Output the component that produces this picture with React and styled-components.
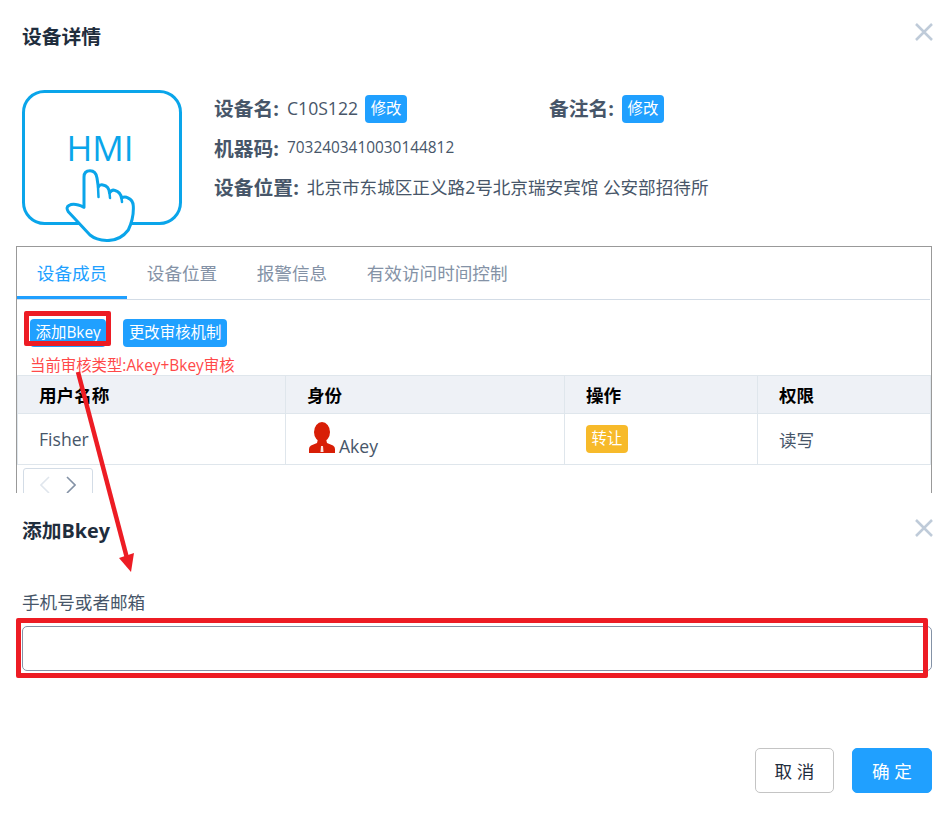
import React from 'react'
import styled, { createGlobalStyle } from 'styled-components'

const GlobalStyle = createGlobalStyle`
  html, body {
    margin: 0;
    padding: 0;
    background: #fff;
  }
  * {
    box-sizing: border-box;
  }
  body {
    font-family: "Open Sans", "Noto Sans CJK SC", sans-serif;
    color: #475669;
  }
`

const Page = styled.div`
  position: relative;
  width: 951px;
  height: 826px;
  overflow: hidden;
`

const DetailDialog = styled.section`
  height: 493px;
  overflow: hidden;
`

const DialogHeader = styled.header`
  display: flex;
  justify-content: space-between;
  align-items: flex-start;
  height: ${props => props.$height}px;
  padding: ${props => props.$top}px 18px 0 22px;
`

const DialogTitle = styled.h2`
  margin: 0;
  font-size: 19.8px;
  line-height: 30px;
  font-weight: 700;
  color: #1f2d3d;
`

const CloseButton = styled.button`
  display: block;
  width: 18px;
  height: 18px;
  margin-top: ${props => props.$offset || 1}px;
  padding: 0;
  border: 0;
  background: none;
  svg {
    display: block;
  }
`

const InfoRow = styled.div`
  display: flex;
  gap: 32px;
  padding-left: 22px;
`

const InfoList = styled.div`
  display: flex;
  flex-direction: column;
  margin-top: -1px;
`

const InfoLine = styled.div`
  display: flex;
  align-items: center;
  height: 39.5px;
  white-space: nowrap;
`

const InfoCell = styled.div`
  display: flex;
  align-items: center;
  width: ${props => props.$width || 'auto'};
`

const Label = styled.span`
  padding-bottom: 2px;
  margin-right: 8px;
  font-size: 19.8px;
  font-weight: 700;
`

const Value = styled.span`
  padding-bottom: 2px;
  font-size: ${props => props.$size || 17.6}px;
`

const SmallButton = styled.button`
  height: 28px;
  margin-left: ${props => props.$left || 0}px;
  padding: 0 5.6px;
  border: 0;
  border-radius: 4px;
  background: ${props => props.$color || '#20a0ff'};
  color: #fff;
  font-family: inherit;
  font-size: 15.4px;
  line-height: 1;
  white-space: nowrap;
`

const TabsBox = styled.div`
  height: 300px;
  margin: 4px 19px 0 16px;
  border: 1px solid #999;
`

const TabBar = styled.div`
  display: flex;
  height: 53px;
  margin-right: 1px;
  border-bottom: 1px solid #d3dce6;
`

const Tab = styled.div`
  height: 52px;
  padding: 0 19.8px;
  border-bottom: 3px solid ${props => (props.$active ? '#20a0ff' : 'transparent')};
  color: ${props => (props.$active ? '#20a0ff' : '#8492a6')};
  font-size: 17.6px;
  line-height: 52px;
  white-space: nowrap;
`

const MemberPane = styled.div`
  padding-top: 19px;
`

const ToolRow = styled.div`
  display: flex;
  gap: 17px;
  padding-left: 13px;
`

const AuditNote = styled.div`
  height: 28px;
  padding-left: 13px;
  color: #ff4949;
  font-size: 15.4px;
  line-height: 38px;
  white-space: nowrap;
`

const MemberTable = styled.table`
  width: 913px;
  border-collapse: collapse;
  table-layout: fixed;
`

const HeadCell = styled.th`
  width: ${props => props.$width}px;
  height: 38px;
  padding: 0 0 0 21px;
  border: 1px solid #dfe6ec;
  background: #eef1f6;
  color: #000;
  font-size: 17.6px;
  font-weight: 700;
  text-align: left;
`

const BodyCell = styled.td`
  height: 51px;
  padding: 0 0 0 21px;
  border: 1px solid #dfe6ec;
  font-size: 17.6px;
  white-space: nowrap;
`

const RoleIcon = styled.svg`
  width: 26px;
  height: 32px;
  margin: 0 4px 0 2px;
  vertical-align: -3px;
`

const RoleText = styled.span`
  position: relative;
  top: 2px;
`

const Pager = styled.div`
  display: flex;
  justify-content: space-around;
  align-items: center;
  width: 70px;
  height: 34px;
  margin: 3px 0 0 6px;
  padding: 0 8px;
  border: 1px solid #d3dce6;
  border-radius: 3px;
`

const AddDialog = styled.section`
  height: 333px;
`

const FieldLabel = styled.label`
  display: block;
  margin-top: 33px;
  padding-left: 22px;
  font-size: 17.6px;
  line-height: 26px;
`

const PhoneInput = styled.input`
  display: block;
  width: 910px;
  height: 45px;
  margin: 11px 0 0 22px;
  border: 1px solid #8492a6;
  border-radius: 5px;
  background: #fff;
  outline: none;
`

const DialogFooter = styled.footer`
  display: flex;
  justify-content: flex-end;
  gap: 18px;
  margin-top: 77px;
  padding-right: 19px;
`

const FooterButton = styled.button`
  width: ${props => (props.$primary ? 80 : 79)}px;
  height: 45px;
  padding: 0;
  border: 1px solid ${props => (props.$primary ? '#20a0ff' : '#c4c4c4')};
  border-radius: 5px;
  background: ${props => (props.$primary ? '#20a0ff' : '#fff')};
  color: ${props => (props.$primary ? '#fff' : '#1f2d3d')};
  font-family: inherit;
  font-size: 17.6px;
`

const MarkBox = styled.div`
  position: absolute;
  left: ${props => props.$x}px;
  top: ${props => props.$y}px;
  width: ${props => props.$w}px;
  height: ${props => props.$h}px;
  border: 5px solid #ed1c24;
  border-radius: 2px;
  pointer-events: none;
`

const ArrowLayer = styled.svg`
  position: absolute;
  left: 0;
  top: 0;
  pointer-events: none;
`

const CloseIcon = () => (
  <svg width="18" height="18" viewBox="0 0 18 18" fill="none" stroke="#bfcbd9" strokeWidth="2.500">
    <path d="M1 1 17 17M17 1 1 17" />
  </svg>
)

const HmiIcon = () => (
  <svg width="160" height="152" viewBox="0 0 160 152" fill="none">
    <rect x="1.500" y="1.500" width="157" height="132" rx="21" stroke="#0aa5ea" strokeWidth="3" />
    <text x="78" y="71" textAnchor="middle" fontFamily="'Open Sans', sans-serif" fontSize="35" fill="#0aa5ea">
      HMI
    </text>
    <path
      d="M62 87Q62 80.700 68 80.700Q74 80.700 75 88L76.300 97Q78 94 81 95Q87 96 87.500 103Q90 99 93 100.500Q98.500 102 99.500 108Q103 106 106 108Q111 110 111.300 116Q112 128 106.300 140Q98 151 84.700 150.500Q74 150 68 145Q56 132 46.300 121.700Q43.500 117 47 115.500Q52 112.500 62 117.300Z"
      fill="#fff"
      stroke="#0aa5ea"
      strokeWidth="3"
      strokeLinejoin="round"
    />
    <path d="M76 97 76.500 107M87.500 103 88 108M99.500 108 100 112" stroke="#0aa5ea" strokeWidth="2.500" strokeLinecap="round" />
  </svg>
)

const UserIcon = () => (
  <RoleIcon viewBox="0 0 26 32">
    <ellipse cx="13" cy="10" rx="8" ry="10" fill="#d81e06" />
    <path d="M9 17h8l1 4 6 2.500q2 1 2 3.500V31H0v-4q0-2.500 2-3.500L8 21z" fill="#d81e06" />
    <path d="M12 24h2l.5 6h-3z" fill="#fbe3df" />
  </RoleIcon>
)

const PagerArrow = ({ dir, color }) => (
  <svg width="10" height="18" viewBox="0 0 10 18" fill="none" stroke={color} strokeWidth="1.600">
    <path d={dir === 'left' ? 'M9 1 1 9l8 8' : 'M1 1l8 8-8 8'} />
  </svg>
)

const App = () => (
  <Page>
    <GlobalStyle />
    <DetailDialog>
      <DialogHeader $height={90} $top={22}>
        <DialogTitle>设备详情</DialogTitle>
        <CloseButton aria-label="关闭"><CloseIcon /></CloseButton>
      </DialogHeader>
      <InfoRow>
        <HmiIcon />
        <InfoList>
          <InfoLine>
            <InfoCell $width="335px">
              <Label>设备名:</Label>
              <Value>C10S122</Value>
              <SmallButton $left={7}>修改</SmallButton>
            </InfoCell>
            <InfoCell>
              <Label>备注名:</Label>
              <SmallButton>修改</SmallButton>
            </InfoCell>
          </InfoLine>
          <InfoLine>
            <Label>机器码:</Label>
            <Value $size={15.4}>7032403410030144812</Value>
          </InfoLine>
          <InfoLine>
            <Label>设备位置:</Label>
            <Value>北京市东城区正义路2号北京瑞安宾馆 公安部招待所</Value>
          </InfoLine>
        </InfoList>
      </InfoRow>
      <TabsBox>
        <TabBar>
          <Tab $active>设备成员</Tab>
          <Tab>设备位置</Tab>
          <Tab>报警信息</Tab>
          <Tab>有效访问时间控制</Tab>
        </TabBar>
        <MemberPane>
          <ToolRow>
            <SmallButton>添加Bkey</SmallButton>
            <SmallButton>更改审核机制</SmallButton>
          </ToolRow>
          <AuditNote>当前审核类型:Akey+Bkey审核</AuditNote>
          <MemberTable>
            <thead>
              <tr>
                <HeadCell $width={268}>用户名称</HeadCell>
                <HeadCell $width={279}>身份</HeadCell>
                <HeadCell $width={193}>操作</HeadCell>
                <HeadCell $width={173}>权限</HeadCell>
              </tr>
            </thead>
            <tbody>
              <tr>
                <BodyCell>Fisher</BodyCell>
                <BodyCell>
                  <UserIcon />
                  <RoleText>Akey</RoleText>
                </BodyCell>
                <BodyCell>
                  <SmallButton $color="#f7ba2a">转让</SmallButton>
                </BodyCell>
                <BodyCell>读写</BodyCell>
              </tr>
            </tbody>
          </MemberTable>
          <Pager>
            <PagerArrow dir="left" color="#e0e6ed" />
            <PagerArrow dir="right" color="#8492a6" />
          </Pager>
        </MemberPane>
      </TabsBox>
    </DetailDialog>
    <AddDialog>
      <DialogHeader $height={63} $top={23}>
        <DialogTitle>添加Bkey</DialogTitle>
        <CloseButton aria-label="关闭" $offset={3}><CloseIcon /></CloseButton>
      </DialogHeader>
      <FieldLabel>手机号或者邮箱</FieldLabel>
      <PhoneInput />
      <DialogFooter>
        <FooterButton>取 消</FooterButton>
        <FooterButton $primary>确 定</FooterButton>
      </DialogFooter>
    </AddDialog>
    <MarkBox $x={24} $y={311} $w={87} $h={35} />
    <MarkBox $x={16} $y={618} $w={912} $h={60} />
    <ArrowLayer width="951" height="826" viewBox="0 0 951 826">
      <path d="M78 372 128 562" stroke="#ed1c24" strokeWidth="4.500" fill="none" />
      <path d="M119 558 134 553 131 572Z" fill="#ed1c24" />
    </ArrowLayer>
  </Page>
)

export default App
